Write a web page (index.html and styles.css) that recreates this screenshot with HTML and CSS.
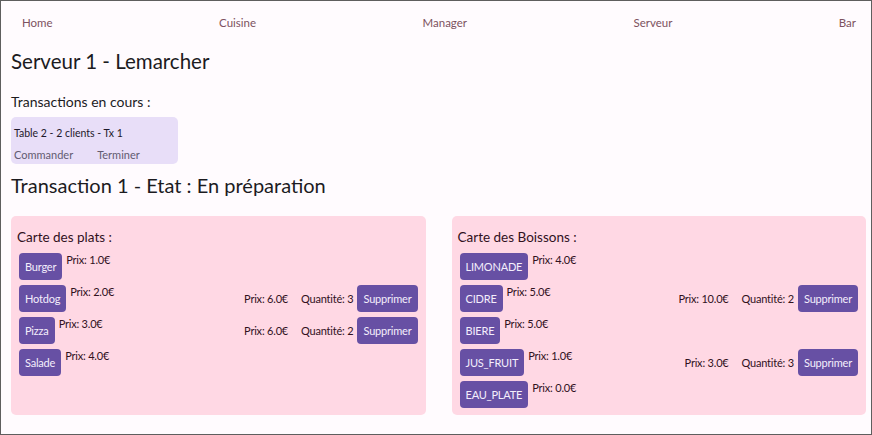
FILE: index.html
```html
<!DOCTYPE html>
<html lang="fr">
<head>
<meta charset="utf-8">
<title>Serveur</title>
<link rel="stylesheet" href="styles.css">
</head>
<body>
<div class="frame">
  <nav class="nav">
    <a class="nav-link">Home</a>
    <a class="nav-link">Cuisine</a>
    <a class="nav-link">Manager</a>
    <a class="nav-link">Serveur</a>
    <a class="nav-link">Bar</a>
  </nav>
  <main class="main">
    <h1 class="page-title">Serveur 1 - Lemarcher</h1>
    <p class="subtitle">Transactions en cours :</p>
    <div class="tx-card">
      <div class="tx-name">Table 2 - 2 clients - Tx 1</div>
      <div class="tx-actions"><a class="tx-link">Commander</a><a class="tx-link">Terminer</a></div>
    </div>
    <h2 class="tx-title">Transaction 1 - Etat : En préparation</h2>
    <div class="menus">
      <section class="menu">
        <h3 class="menu-title">Carte des plats :</h3>
        <ul class="menu-list">
          <li class="menu-row">
            <div class="item"><button class="btn">Burger</button><span class="price">Prix: 1.0€</span></div>
          </li>
          <li class="menu-row">
            <div class="item"><button class="btn">Hotdog</button><span class="price">Prix: 2.0€</span></div>
            <div class="order"><span class="order-price">Prix: 6.0€</span><span class="order-qty">Quantité: 3</span><button class="btn">Supprimer</button></div>
          </li>
          <li class="menu-row">
            <div class="item"><button class="btn">Pizza</button><span class="price">Prix: 3.0€</span></div>
            <div class="order"><span class="order-price">Prix: 6.0€</span><span class="order-qty">Quantité: 2</span><button class="btn">Supprimer</button></div>
          </li>
          <li class="menu-row">
            <div class="item"><button class="btn">Salade</button><span class="price">Prix: 4.0€</span></div>
          </li>
        </ul>
      </section>
      <section class="menu">
        <h3 class="menu-title">Carte des Boissons :</h3>
        <ul class="menu-list">
          <li class="menu-row">
            <div class="item"><button class="btn">LIMONADE</button><span class="price">Prix: 4.0€</span></div>
          </li>
          <li class="menu-row">
            <div class="item"><button class="btn">CIDRE</button><span class="price">Prix: 5.0€</span></div>
            <div class="order"><span class="order-price">Prix: 10.0€</span><span class="order-qty">Quantité: 2</span><button class="btn">Supprimer</button></div>
          </li>
          <li class="menu-row">
            <div class="item"><button class="btn">BIERE</button><span class="price">Prix: 5.0€</span></div>
          </li>
          <li class="menu-row">
            <div class="item"><button class="btn">JUS_FRUIT</button><span class="price">Prix: 1.0€</span></div>
            <div class="order"><span class="order-price">Prix: 3.0€</span><span class="order-qty">Quantité: 3</span><button class="btn">Supprimer</button></div>
          </li>
          <li class="menu-row">
            <div class="item"><button class="btn">EAU_PLATE</button><span class="price">Prix: 0.0€</span></div>
          </li>
        </ul>
      </section>
    </div>
  </main>
</div>
</body>
</html>
```
FILE: styles.css
```css
* { box-sizing: border-box; }
html, body { margin: 0; padding: 0; }
body {
  font-family: "Lato", "DejaVu Sans", sans-serif;
  background: #fffbfe;
  color: #1c1b1f;
}
.frame {
  width: 872px;
  height: 435px;
  border: 1px solid #5e5e5e;
  background: #fffbfe;
  overflow: hidden;
}
.nav {
  height: 44px;
  display: flex;
  align-items: center;
  justify-content: space-between;
  padding: 0 15px 0 21px;
}
.nav-link {
  font-size: 11.5px;
  line-height: 14px;
  color: #7d5260;
}
.main {
  padding: 0 5px 0 10px;
}
.page-title {
  margin: 3px 0 0;
  font-size: 20.5px;
  line-height: 26px;
  font-weight: 400;
  color: #1c1b1f;
}
.subtitle {
  margin: 19px 0 0;
  font-size: 14px;
  line-height: 18px;
}
.tx-card {
  margin-top: 6px;
  width: 167px;
  height: 47px;
  background: #e8def8;
  border-radius: 5px;
  padding: 9px 3px 2px;
}
.tx-name {
  font-size: 10.5px;
  line-height: 14px;
  color: #1d192b;
}
.tx-actions {
  margin-top: 8px;
  display: flex;
  gap: 24px;
}
.tx-link {
  font-size: 11px;
  line-height: 14px;
  color: #625b71;
}
.tx-title {
  margin: 9px 0 0;
  font-size: 20px;
  line-height: 24px;
  font-weight: 400;
}
.menus {
  margin-top: 19px;
  display: grid;
  grid-template-columns: 1fr 1fr;
  gap: 26px;
}
.menu {
  background: #ffd8e4;
  border-radius: 5px;
  padding: 12px 8px 7px;
  color: #31111d;
}
.menu-title {
  margin: 0 0 0 -2px;
  font-size: 13.5px;
  line-height: 18px;
  font-weight: 400;
}
.menu-list {
  list-style: none;
  margin: 7px 0 0;
  padding: 0;
  display: flex;
  flex-direction: column;
  gap: 5px;
}
.menu-row {
  display: flex;
  justify-content: space-between;
  align-items: center;
  height: 27px;
}
.item {
  display: flex;
  align-items: flex-start;
  height: 27px;
}
.btn {
  height: 27px;
  padding: 0 6px;
  border: none;
  border-radius: 4px;
  background: #6750a4;
  color: #f4eefc;
  font-family: inherit;
  font-size: 11px;
  letter-spacing: -0.2px;
  line-height: 27px;
}
.price {
  margin-left: 4px;
  font-size: 11px;
  letter-spacing: -0.2px;
  line-height: 14px;
}
.order {
  display: flex;
  align-items: center;
  font-size: 11px;
  letter-spacing: -0.2px;
}
.order-price { margin-right: 13px; }
.order-qty { margin-right: 4px; }
```
